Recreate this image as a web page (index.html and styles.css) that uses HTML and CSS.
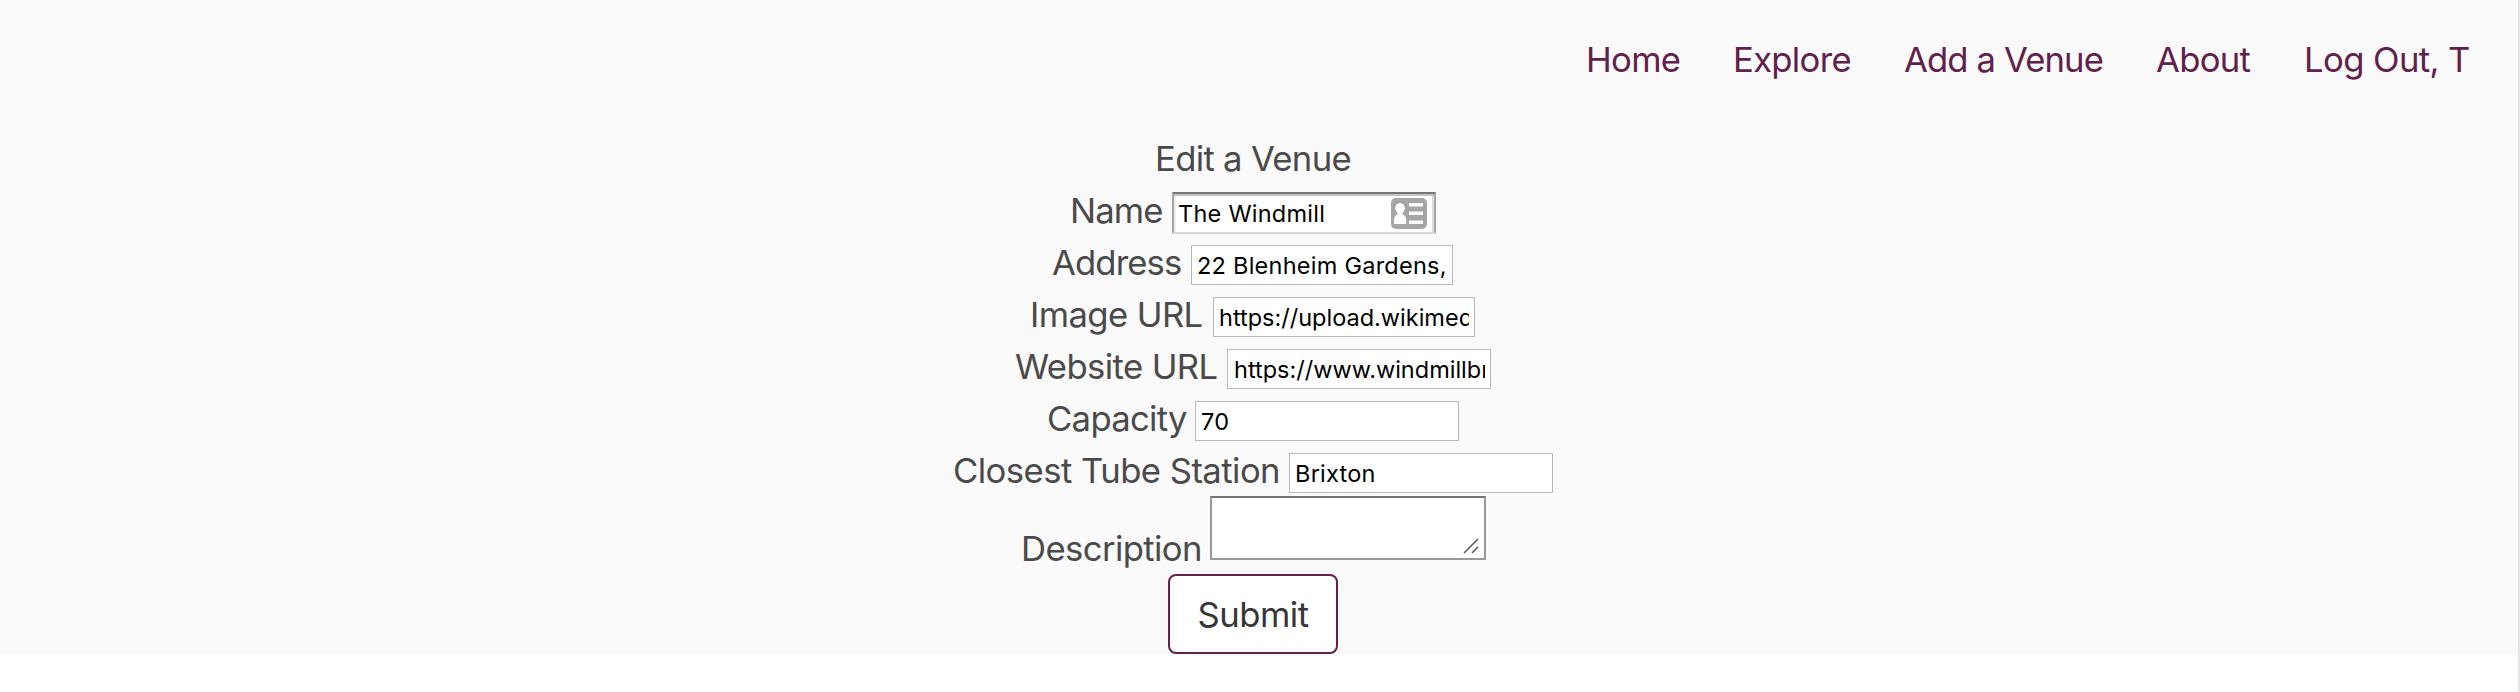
FILE: index.html
```html
<!DOCTYPE html>
<html lang="en">
<head>
<meta charset="utf-8">
<title>Edit a Venue</title>
<link rel="stylesheet" href="styles.css">
</head>
<body>
<div class="page">
  <nav class="nav">
    <a class="nav-link home">Home</a>
    <a class="nav-link explore">Explore</a>
    <a class="nav-link add">Add a Venue</a>
    <a class="nav-link about">About</a>
    <a class="nav-link logout">Log Out, T</a>
  </nav>
  <form class="form">
    <div class="row title"><span>Edit a Venue</span></div>
    <div class="row"><label class="label name">Name</label><div class="field active"><input class="value" value="The Windmill"><svg class="card" viewBox="0 0 36 31"><rect width="36" height="31" rx="5" fill="#a6a6a6"/><g fill="#fff"><ellipse cx="9" cy="10.3" rx="4.8" ry="5.3"/><path d="M6.5 13h5v3.500c2.500.8 3.700 2.500 3.700 5.500v4H3v-4c0-3 1.200-4.700 3.500-5.500z"/><path d="M18 5h14v3.500H18zM18 13.500h14V17H18zM18 22.500h14V26H18z"/></g></svg></div></div>
    <div class="row"><label class="label address">Address</label><div class="field narrow"><input class="value" value="22 Blenheim Gardens,"></div></div>
    <div class="row"><label class="label image">Image URL</label><div class="field narrow"><input class="value url" value="https://upload.wikimedia"></div></div>
    <div class="row"><label class="label website">Website URL</label><div class="field site"><input class="value url" value="https://www.windmillbrixton"></div></div>
    <div class="row"><label class="label capacity">Capacity</label><div class="field"><input class="value" value="70"></div></div>
    <div class="row"><label class="label station">Closest Tube Station</label><div class="field"><input class="value" value="Brixton"></div></div>
    <div class="row tall"><label class="label description">Description</label><div class="area"><svg class="grip" viewBox="0 0 16 16"><path d="M1 15L15 1M9 15l6-6" stroke="#555" stroke-width="1.500" fill="none"/></svg></div></div>
    <div class="row"><button class="submit" type="button">Submit</button></div>
  </form>
</div>
</body>
</html>
```
FILE: styles.css
```css
* { box-sizing: border-box; }
body { margin: 0; background: #fff; font-family: Inter, "Liberation Sans", sans-serif; font-size: 34.67px; line-height: 52px; color: #4a4a4a; }
.page { height: 692px; border-right: 2px solid #e5e5e5; background: linear-gradient(#fafafa 654px, #fff 654px); }
.nav { display: flex; justify-content: flex-end; height: 132px; padding: 33px 46px 0 0; color: #60224a; }
.nav-link { white-space: nowrap; letter-spacing: -0.7px; }
.home { width: 147px; }
.explore { width: 171px; }
.add { width: 252px; letter-spacing: -0.9px; }
.about { width: 148px; }
.logout { width: 168px; letter-spacing: -0.6px; }
.form { width: 2506px; }
.row { display: flex; justify-content: center; height: 52px; }
.title { letter-spacing: -0.7px; }
.label { white-space: nowrap; letter-spacing: -0.55px; }
.name { width: 102px; letter-spacing: -0.9px; }
.address { width: 138px; letter-spacing: -0.9px; text-indent: -1px; }
.image { width: 182px; letter-spacing: -0.6px; text-indent: -1px; }
.website { width: 212px; letter-spacing: -0.6px; }
.capacity { width: 148px; letter-spacing: -0.7px; }
.station { width: 336px; }
.description { width: 190px; padding: 26px 0 0 1px; letter-spacing: -0.6px; }
.field { display: flex; width: 264px; height: 40px; margin-top: 9px; padding: 0 5px; border: 1px solid #b8b8b8; background: #fff; }
.narrow { width: 262px; }
.value { flex: 1; min-width: 0; height: 40px; padding: 0; border: 0; outline: 0; background: transparent; color: #000; font: 23.500px/40px Inter, "Liberation Sans", sans-serif; letter-spacing: 0.25px; }
.url { letter-spacing: 0; }
.site { padding-left: 6px; }
.active { height: 42px; margin-top: 8px; padding: 0 7px 0 4px; border: 2px solid; border-color: #757575 #a6a6a6 #d8d8d8; box-shadow: inset 0 2px #c4c4c4, inset -2px 0 #ddd, inset 2px 0 #eee; }
.card { flex: none; width: 36px; height: 31px; margin-top: 4px; }
.tall { height: 78px; }
.area { display: flex; align-items: flex-end; justify-content: flex-end; width: 276px; height: 64px; padding: 4px 5px; border: 2px solid #999; border-top-color: #757575; background: #fff; }
.grip { width: 16px; height: 16px; }
.submit { width: 170px; height: 80px; padding: 0; border: 2px solid #60224a; border-radius: 8px; background: #fff; color: #363636; font: inherit; letter-spacing: -0.5px; }
```
